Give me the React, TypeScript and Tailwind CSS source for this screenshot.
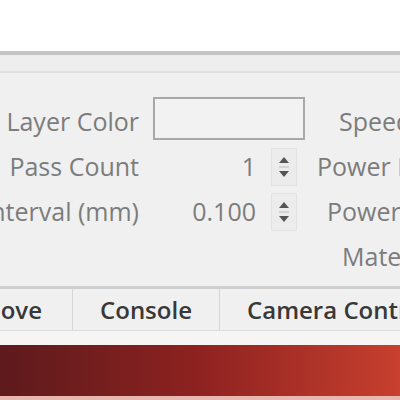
import React from 'react'

function Spinner() {
  return (
    <div className="flex h-[38px] w-[26px] flex-col items-center justify-center border border-[#e2e2e2] bg-[#ececec]">
      <svg width="12" height="30" viewBox="0 0 12 30">
        <path d="M6 5 L11 11 L1 11 Z" fill="#555" />
        <line x1="1" y1="15" x2="11" y2="15" stroke="#bbb" strokeWidth="1" />
        <path d="M1 19 L11 19 L6 25 Z" fill="#555" />
      </svg>
    </div>
  )
}

// rightGap: space between the value column and the second label column
const rows = [
  { left: 'Layer Color', right: 'Speed (mm/s)', kind: 'color', rightGap: 'ml-[34px]' },
  { left: 'Pass Count', right: 'Power Max (%)', kind: 'spin', value: '1', rightGap: 'ml-[12px]' },
  { left: 'Interval (mm)', right: 'Power Min (%)', kind: 'spin', value: '0.100', rightGap: 'ml-[22px]' },
  { left: '', right: 'Material', kind: 'none', rightGap: 'ml-[37px]' },
]

export default function App() {
  return (
    <div
      className="h-[400px] w-[400px] overflow-hidden bg-white"
      style={{ fontFamily: '"Open Sans", "Noto Sans", sans-serif' }}
    >
      <div className="h-[51px] bg-white" />
      <div className="h-[4px] bg-[#c4c4c4]" />
      <div className="h-[18px] border-b-2 border-[#e0e0e0] bg-[#eeeeee]" />

      {/* settings panel */}
      <div className="flex h-[213px] flex-col bg-[#f0f0f0] pt-[26px] text-[25px] text-[#7c7c7c]">
        {rows.map((r) => (
          <div key={r.right} className="flex h-[45px] items-center">
            <div className="flex w-[139px] shrink-0 justify-end whitespace-nowrap">{r.left}</div>
            <div className="ml-[14px] flex w-[152px] shrink-0 items-center justify-end">
              {r.kind === 'color' && (
                <div className="mb-[7px] h-[43px] w-[152px] border-2 border-[#a8a8a8] bg-[#f2f2f2]" />
              )}
              {r.kind === 'spin' && (
                <>
                  <span className="mr-[15px] whitespace-nowrap">{r.value}</span>
                  <div className="mr-[8px]">
                    <Spinner />
                  </div>
                </>
              )}
            </div>
            <div className={`${r.rightGap} shrink-0 whitespace-nowrap`}>{r.right}</div>
          </div>
        ))}
      </div>

      {/* tabs */}
      <div className="h-[3px] bg-[#cfcfcf]" />
      <div className="flex h-[41px] items-center bg-[#f0f0f0] text-[24px] font-semibold text-[#383838]">
        <div className="flex h-full w-[73px] shrink-0 items-center justify-end border-r border-[#d6d6d6] pr-[30px]">
          <span className="whitespace-nowrap">Move</span>
        </div>
        <div className="flex h-full w-[147px] shrink-0 items-center justify-center border-r border-[#d6d6d6]">
          Console
        </div>
        <div className="flex h-full shrink-0 items-center whitespace-nowrap pl-[27px]">Camera Control</div>
      </div>
      <div className="h-[15px] border-t border-[#dcdcdc] bg-[#f7f4f4]" />

      {/* red bar */}
      <div className="h-[51px] bg-gradient-to-r from-[#5e1a1c] via-[#8e2220] to-[#c8402e]" />
      <div className="h-[6px] bg-[#e8b8b0]" />
    </div>
  )
}
